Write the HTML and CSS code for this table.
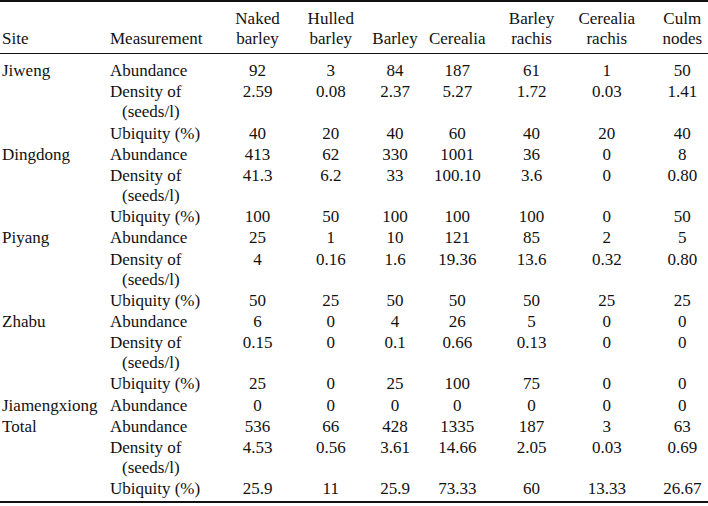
FILE: index.html
```html
<!DOCTYPE html>
<html lang="en">
<head>
<meta charset="utf-8">
<title>Crop remains by site</title>
<link rel="stylesheet" href="styles.css">
</head>
<body>
<table class="data">
  <colgroup>
    <col class="w-site"><col class="w-meas"><col class="w-c3"><col class="w-c4"><col class="w-c5"><col class="w-c6"><col class="w-c7"><col class="w-c8"><col class="w-c9">
  </colgroup>
  <thead>
    <tr>
      <th class="txt">Site</th>
      <th class="txt">Measurement</th>
      <th>Naked<br>barley</th>
      <th>Hulled<br>barley</th>
      <th>Barley</th>
      <th>Cerealia</th>
      <th>Barley<br>rachis</th>
      <th>Cerealia<br>rachis</th>
      <th>Culm<br>nodes</th>
    </tr>
  </thead>
  <tbody>
    <tr class="first"><td>Jiweng</td><td>Abundance</td><td>92</td><td>3</td><td>84</td><td>187</td><td>61</td><td>1</td><td>50</td></tr>
    <tr><td></td><td class="dens">Density of<br>(seeds/l)</td><td>2.59</td><td>0.08</td><td>2.37</td><td>5.27</td><td>1.72</td><td>0.03</td><td>1.41</td></tr>
    <tr><td></td><td>Ubiquity (%)</td><td>40</td><td>20</td><td>40</td><td>60</td><td>40</td><td>20</td><td>40</td></tr>

    <tr><td>Dingdong</td><td>Abundance</td><td>413</td><td>62</td><td>330</td><td>1001</td><td>36</td><td>0</td><td>8</td></tr>
    <tr><td></td><td class="dens">Density of<br>(seeds/l)</td><td>41.3</td><td>6.2</td><td>33</td><td>100.10</td><td>3.6</td><td>0</td><td>0.80</td></tr>
    <tr><td></td><td>Ubiquity (%)</td><td>100</td><td>50</td><td>100</td><td>100</td><td>100</td><td>0</td><td>50</td></tr>

    <tr><td>Piyang</td><td>Abundance</td><td>25</td><td>1</td><td>10</td><td>121</td><td>85</td><td>2</td><td>5</td></tr>
    <tr><td></td><td class="dens">Density of<br>(seeds/l)</td><td>4</td><td>0.16</td><td>1.6</td><td>19.36</td><td>13.6</td><td>0.32</td><td>0.80</td></tr>
    <tr><td></td><td>Ubiquity (%)</td><td>50</td><td>25</td><td>50</td><td>50</td><td>50</td><td>25</td><td>25</td></tr>

    <tr><td>Zhabu</td><td>Abundance</td><td>6</td><td>0</td><td>4</td><td>26</td><td>5</td><td>0</td><td>0</td></tr>
    <tr><td></td><td class="dens">Density of<br>(seeds/l)</td><td>0.15</td><td>0</td><td>0.1</td><td>0.66</td><td>0.13</td><td>0</td><td>0</td></tr>
    <tr><td></td><td>Ubiquity (%)</td><td>25</td><td>0</td><td>25</td><td>100</td><td>75</td><td>0</td><td>0</td></tr>

    <tr><td>Jiamengxiong</td><td>Abundance</td><td>0</td><td>0</td><td>0</td><td>0</td><td>0</td><td>0</td><td>0</td></tr>

    <tr><td>Total</td><td>Abundance</td><td>536</td><td>66</td><td>428</td><td>1335</td><td>187</td><td>3</td><td>63</td></tr>
    <tr><td></td><td class="dens">Density of<br>(seeds/l)</td><td>4.53</td><td>0.56</td><td>3.61</td><td>14.66</td><td>2.05</td><td>0.03</td><td>0.69</td></tr>
    <tr class="last"><td></td><td>Ubiquity (%)</td><td>25.9</td><td>11</td><td>25.9</td><td>73.33</td><td>60</td><td>13.33</td><td>26.67</td></tr>
  </tbody>
</table>
</body>
</html>
```

FILE: styles.css
```css
html, body {
  margin: 0;
  padding: 0;
  background: #ffffff;
}

body {
  font-family: "Liberation Serif", "Times New Roman", serif;
  font-size: 17px;
  color: #111111;
}

.data {
  width: 708px;
  table-layout: fixed;
  border-collapse: separate;
  border-spacing: 0;
}

.w-site { width: 110px; }
.w-meas { width: 111px; }
.w-c3 { width: 73px; }
.w-c4 { width: 69.5px; }
.w-c5 { width: 63px; }
.w-c6 { width: 67.5px; }
.w-c7 { width: 75px; }
.w-c8 { width: 75.5px; }
.w-c9 { width: 63.5px; }

.data th,
.data td {
  padding: 0.6px 0;
  line-height: 20px;
  text-align: center;
  vertical-align: top;
  white-space: nowrap;
  font-weight: normal;
}

.data th {
  vertical-align: bottom;
  padding-top: 7.25px;
  padding-bottom: 3.75px;
  border-top: 2px solid #111111;
  border-bottom: 1px solid #111111;
}

.data th.txt {
  text-align: left;
}

.data td:nth-child(1),
.data th:nth-child(1) {
  text-align: left;
  padding-left: 2px;
}

.data td:nth-child(2) {
  text-align: left;
}

.data td:nth-child(4),
.data th:nth-child(4) {
  padding-left: 4px;
}

.data td:nth-child(6),
.data th:nth-child(6) {
  padding-right: 6px;
}

.data td:nth-child(9),
.data th:nth-child(9) {
  padding-left: 12px;
}

.data td.dens {
  padding-left: 12px;
  text-indent: -12px;
}

.data tr.first td {
  padding-top: 7.25px;
}

.data tr.last td {
  padding-bottom: 1.5px;
  border-bottom: 2px solid #111111;
}
```
